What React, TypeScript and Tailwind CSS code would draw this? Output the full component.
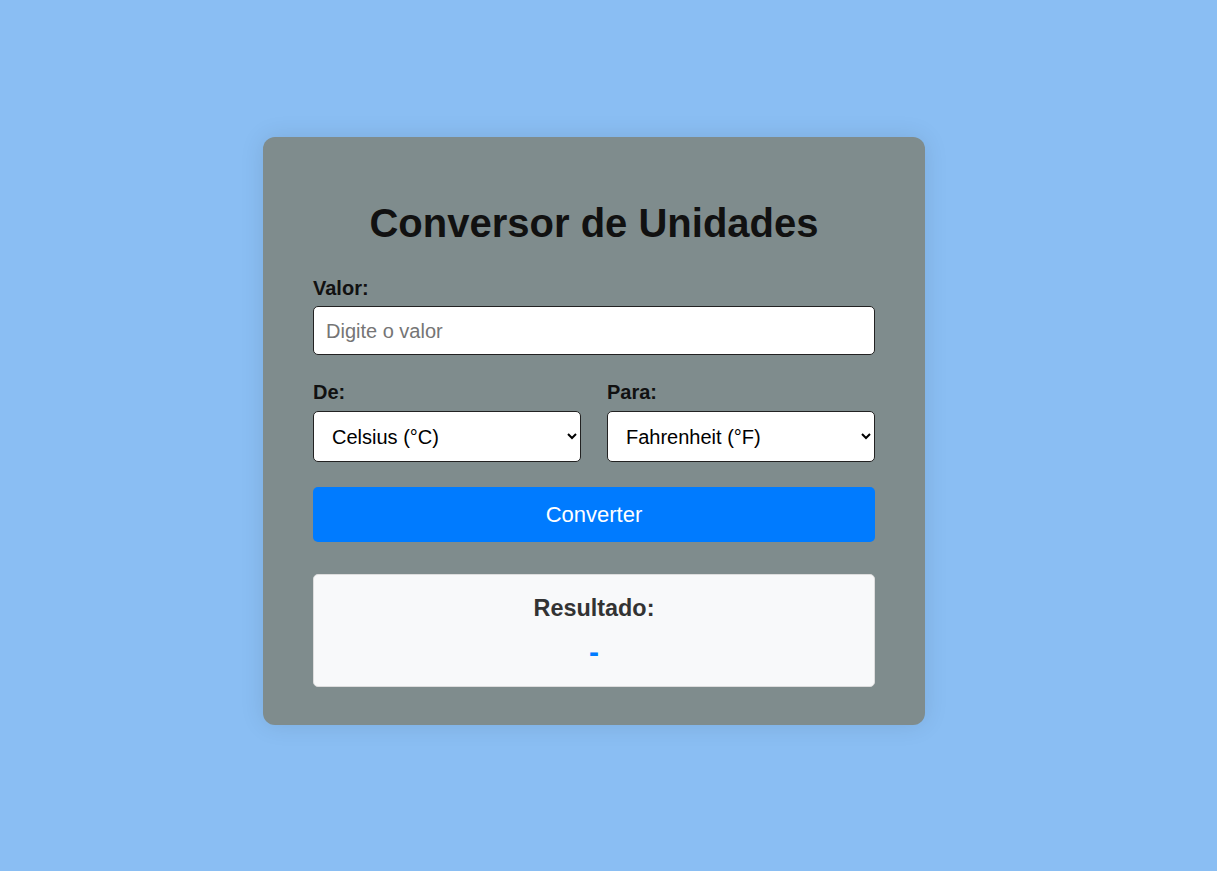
import { useState } from 'react'

const units = [
  { value: 'C', label: 'Celsius (°C)' },
  { value: 'F', label: 'Fahrenheit (°F)' },
  { value: 'K', label: 'Kelvin (K)' },
]

export default function App() {
  const [valor, setValor] = useState('')
  const [de, setDe] = useState('C')
  const [para, setPara] = useState('F')
  const [resultado, setResultado] = useState('-')

  const converter = () => {
    const v = parseFloat(valor)
    if (isNaN(v)) { setResultado('-'); return }
    let c = v
    if (de === 'F') c = (v - 32) * 5 / 9
    if (de === 'K') c = v - 273.15
    let r = c
    if (para === 'F') r = c * 9 / 5 + 32
    if (para === 'K') r = c + 273.15
    setResultado(r.toFixed(2))
  }

  return (
    <div className="min-h-screen bg-[#8abef3] flex justify-center pt-[137px] pr-[29px] font-['Liberation_Sans',Arial,sans-serif]">
      <div className="w-[662px] h-fit rounded-[12px] bg-[#7f8c8d] px-[50px] pt-[63px] pb-[38px] shadow-[0_0_25px_rgba(0,0,0,0.1)]">
        {/* Title */}
        <h1 className="text-center text-[40px] leading-[46px] font-bold text-[#111]">Conversor de Unidades</h1>

        {/* Valor */}
        <label className="block mt-[31px] text-[20px] leading-[23px] font-bold text-[#111]">Valor:</label>
        <input
          type="number"
          value={valor}
          onChange={(e) => setValor(e.target.value)}
          placeholder="Digite o valor"
          className="mt-[6px] block w-full h-[49px] rounded-[5px] border border-[#222] bg-white px-[12px] pt-[2px] text-[20px] text-black placeholder:text-[#757575] outline-none"
        />

        {/* De / Para */}
        <div className="mt-[26px] grid grid-cols-2 gap-[26px]">
          <div>
            <label className="block text-[20px] leading-[23px] font-bold text-[#111]">De:</label>
            <select
              value={de}
              onChange={(e) => setDe(e.target.value)}
              className="mt-[7px] block w-full h-[51px] rounded-[5px] border border-[#222] bg-white pl-[14px] pr-[4px] text-[20px] text-black outline-none"
            >
              {units.map((u) => <option key={u.value} value={u.value}>{u.label}</option>)}
            </select>
          </div>
          <div>
            <label className="block text-[20px] leading-[23px] font-bold text-[#111]">Para:</label>
            <select
              value={para}
              onChange={(e) => setPara(e.target.value)}
              className="mt-[7px] block w-full h-[51px] rounded-[5px] border border-[#222] bg-white pl-[14px] pr-[4px] text-[20px] text-black outline-none"
            >
              {units.map((u) => <option key={u.value} value={u.value}>{u.label}</option>)}
            </select>
          </div>
        </div>

        <button
          onClick={converter}
          className="mt-[25px] block w-full h-[55px] rounded-[5px] bg-[#007bff] text-white text-[22px]"
        >
          Converter
        </button>

        {/* Resultado */}
        <div className="mt-[32px] h-[113px] rounded-[5px] border border-[#ddd] bg-[#f8f9fa] pt-[20px] text-center">
          <h3 className="text-[23.4px] leading-[27px] font-bold text-[#333]">Resultado:</h3>
          <p className="mt-[13px] text-[30px] leading-[34px] font-bold text-[#007bff]">{resultado}</p>
        </div>
      </div>
    </div>
  )
}
